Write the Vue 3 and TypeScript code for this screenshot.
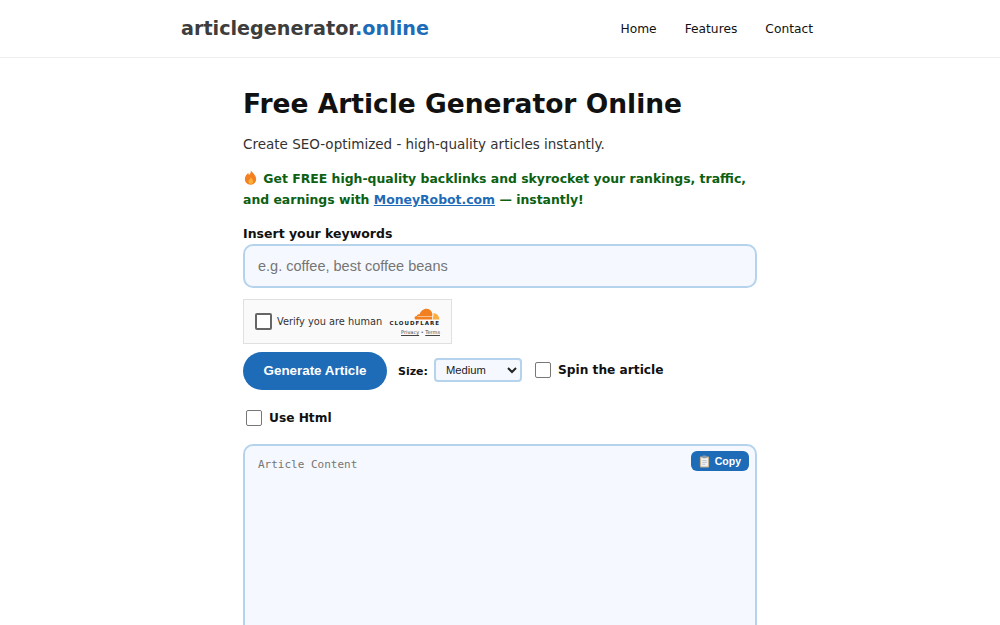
<template>
  <div class="page">
    <header class="site-header">
      <div class="site-header__inner">
        <a class="logo" href="#">articlegenerator<span>.online</span></a>
        <nav class="nav">
          <a v-for="link in links" :key="link" href="#">{{ link }}</a>
        </nav>
      </div>
    </header>

    <main class="content">
      <h1>Free Article Generator Online</h1>
      <p class="lead">Create SEO-optimized - high-quality articles instantly.</p>
      <p class="promo">
        <svg class="fire" viewBox="0 0 16 16" width="15" height="15" aria-hidden="true">
          <path fill="#f4801f" d="M8.2 0.4c.5 2.4-.6 3.6-1.8 4.9-.4-.7-.6-1.300-.6-2C3.400 5 2 7.200 2 9.700 2 13.200 4.600 15.700 8 15.700s6-2.500 6-5.900c0-4-3-6.300-5.800-9.400z" />
          <path fill="#fbb03b" d="M8.300 7.500c.2 1.600-1.900 2.400-2.400 4.200-.4 1.700.8 3.200 2.300 3.200 1.600 0 2.800-1.300 2.600-3-.2-1.700-1.800-2.600-2.500-4.400z" />
        </svg>
        Get FREE high-quality backlinks and skyrocket your rankings, traffic, and earnings with
        <a href="#">MoneyRobot.com</a> — instantly!
      </p>

      <label class="field-label" for="keywords">Insert your keywords</label>
      <input id="keywords" class="keywords" type="text" placeholder="e.g. coffee, best coffee beans" />

      <div class="captcha">
        <span class="captcha__box"></span>
        <span class="captcha__text">Verify you are human</span>
        <div class="captcha__brand">
          <svg viewBox="0 0 32 15" width="26" height="12" aria-hidden="true">
            <path fill="#f38020" d="M22.500 14.500H2.600C1.200 14.500.5 13.500.5 12.400c0-1.500 1.200-2.500 2.700-2.300.2-1.800 1.900-2.800 3.500-2.200C8 4 11.500 1 15.200 1c3.700 0 6.500 2.500 7.300 5.700l.8 4.500z" />
            <path fill="#faae40" d="M24.300 6.600c3.500 0 6.700 2.700 7.200 7.900H22.700c.9-2 1.300-4.700 1.600-7.900z" />
            <path fill="#fff" d="M4 10.700h19.300v.7H4zM23 8.100l.8 0-.7 6.400-.9 0z" />
          </svg>
          <span class="captcha__wordmark">CLOUDFLARE</span>
          <span class="captcha__links"><a href="#">Privacy</a> • <a href="#">Terms</a></span>
        </div>
      </div>

      <div class="controls">
        <button class="generate" type="button">Generate Article</button>
        <label class="size-label" for="size">Size:</label>
        <select id="size" v-model="size" class="size">
          <option v-for="opt in sizes" :key="opt">{{ opt }}</option>
        </select>
        <label class="check check--spin"><input type="checkbox" /> Spin the article</label>
      </div>

      <label class="check check--html"><input type="checkbox" /> Use Html</label>

      <div class="output">
        <textarea class="output__area" placeholder="Article Content"></textarea>
        <button class="copy" type="button">
          <svg viewBox="0 0 12 14" width="11" height="13" aria-hidden="true">
            <rect x="1" y="1.500" width="10" height="12" rx="1" fill="#c9b48f" />
            <rect x="2.300" y="3" width="7.400" height="9.300" fill="#f2f5f8" />
            <rect x="3.800" y="0.500" width="4.400" height="3" rx=".6" fill="#8d99a8" />
            <path d="M3.500 6h5M3.500 8h5M3.500 10h3.500" stroke="#a9b4c0" stroke-width=".8" />
          </svg>
          Copy
        </button>
      </div>
    </main>
  </div>
</template>

<script setup lang="ts">
import { ref } from 'vue'

const links = ['Home', 'Features', 'Contact']
const sizes = ['Small', 'Medium', 'Large']
const size = ref('Medium')
</script>

<style>
html,
body {
  margin: 0;
  overflow: hidden;
  background: #fff;
}
</style>

<style scoped>
.page {
  height: 625px;
  overflow: hidden;
  font-family: "DejaVu Sans", Verdana, sans-serif;
  color: #111;
}

.site-header {
  height: 57px;
  border-bottom: 1px solid #eee;
}

.site-header__inner {
  width: 632px;
  height: 56px;
  margin-left: 181px;
  display: flex;
  justify-content: space-between;
  align-items: center;
}

.logo {
  font-size: 19.2px;
  font-weight: 700;
  color: #3d3d3d;
  text-decoration: none;
}

.logo span {
  color: #1e6bb8;
}

.nav {
  display: flex;
  gap: 28px;
  padding-top: 1px;
}

.nav a {
  font-size: 12.250px;
  color: #111;
  text-decoration: none;
}

.content {
  width: 514px;
  margin: 0 auto;
}

h1 {
  margin: 28px 0 0;
  font-size: 26.5px;
  line-height: 36px;
  font-weight: 700;
  color: #111;
}

.lead {
  margin: 11px 0 0;
  font-size: 13.500px;
  line-height: 22px;
  color: #333;
}

.promo {
  margin: 13px 0 0;
  font-size: 12.430px;
  line-height: 21px;
  font-weight: 700;
  color: #0b6012;
}

.promo a {
  color: #1e6bb8;
}

.fire {
  vertical-align: -2px;
  margin-right: 1px;
}

.field-label {
  display: block;
  margin-top: 16px;
  font-size: 12.500px;
  line-height: 16px;
  font-weight: 700;
}

.keywords {
  display: block;
  box-sizing: border-box;
  width: 514px;
  height: 44px;
  margin-top: 2px;
  padding: 0 13px;
  background: #f5f9ff;
  border: 2px solid #b5d3ec;
  border-radius: 10px;
  font-family: "Liberation Sans", Arial, sans-serif;
  font-size: 14.500px;
  outline: none;
}

.keywords::placeholder {
  color: #757575;
  opacity: 1;
}

.captcha {
  box-sizing: border-box;
  width: 209px;
  height: 45px;
  margin-top: 11px;
  padding: 0 11px;
  display: flex;
  align-items: center;
  background: #fafafa;
  border: 1px solid #e0e0e0;
}

.captcha__box {
  box-sizing: border-box;
  width: 17px;
  height: 17px;
  background: #fff;
  border: 2px solid #666;
  border-radius: 2px;
}

.captcha__text {
  margin-left: 5px;
  font-size: 9.800px;
  color: #333;
  white-space: nowrap;
}

.captcha__brand {
  margin-left: auto;
  display: flex;
  flex-direction: column;
  align-items: flex-end;
  line-height: 1;
}

.captcha__wordmark {
  font-size: 5.500px;
  font-weight: 700;
  letter-spacing: 1px;
  color: #222;
  margin-top: 1px;
}

.captcha__links {
  margin-top: 3px;
  font-size: 5px;
  color: #444;
}

.captcha__links a {
  color: #444;
}

.controls {
  display: flex;
  align-items: center;
  margin-top: 8px;
  height: 38px;
}

.generate {
  width: 144px;
  height: 38px;
  padding: 0 0 2px;
  background: #1e6bb8;
  color: #fff;
  border: 0;
  border-radius: 19px;
  font-family: "Liberation Sans", Arial, sans-serif;
  font-size: 13.400px;
  font-weight: 700;
  cursor: pointer;
}

.size-label {
  margin-left: 11px;
  font-size: 11px;
  font-weight: 700;
}

.size {
  box-sizing: border-box;
  width: 88px;
  height: 24px;
  margin: 0 0 2px 6px;
  padding-left: 6px;
  background: #f5f9ff;
  border: 2px solid #b5d3ec;
  border-radius: 4px;
  font-family: "Liberation Sans", Arial, sans-serif;
  font-size: 11.200px;
  color: #222;
}

.check {
  display: flex;
  align-items: center;
  font-size: 12.200px;
  font-weight: 700;
  color: #111;
}

.check input {
  box-sizing: border-box;
  appearance: none;
  width: 16px;
  height: 16px;
  margin: 0 7px 0 0;
  background: #fff;
  border: 1px solid #777;
  border-radius: 2px;
}

.check--spin {
  margin-left: 13px;
  margin-bottom: 2px;
}

.check--html {
  margin: 19px 0 0 3px;
  height: 18px;
}

.output {
  position: relative;
  margin-top: 17px;
}

.output__area {
  display: block;
  box-sizing: border-box;
  width: 514px;
  height: 300px;
  padding: 11px 13px;
  background: #f5f9ff;
  border: 2px solid #b5d3ec;
  border-radius: 10px;
  font-family: "DejaVu Sans Mono", monospace;
  font-size: 11px;
  line-height: 16px;
  resize: none;
  outline: none;
}

.output__area::placeholder {
  color: #757575;
  opacity: 1;
}

.copy {
  position: absolute;
  top: 7px;
  right: 8px;
  display: flex;
  align-items: center;
  gap: 5px;
  height: 20px;
  padding: 0 8px;
  background: #1e6bb8;
  color: #fff;
  border: 0;
  border-radius: 6px;
  font-family: "Liberation Sans", Arial, sans-serif;
  font-size: 10.500px;
  font-weight: 700;
  cursor: pointer;
}
</style>
